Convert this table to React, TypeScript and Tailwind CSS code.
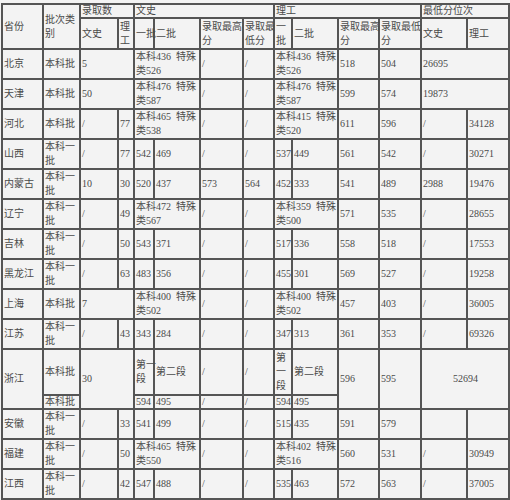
import type { ReactNode } from 'react'

type CellProps = {
  children?: ReactNode
  cs?: number
  rs?: number
  center?: boolean
}

/** One table cell; lines are broken by hand with <br/> so wrapping never shifts the grid. */
function C({ children, cs, rs, center }: CellProps) {
  return (
    <td
      colSpan={cs}
      rowSpan={rs}
      className={`overflow-visible whitespace-nowrap border-2 border-[#555] py-0 pl-px pr-0 align-middle ${center ? 'text-center' : 'text-left'}`}
    >
      {children}
    </td>
  )
}

function Two({ a, b }: { a: string; b: string }) {
  return (
    <>
      {a}
      <br />
      {b}
    </>
  )
}

const widths = [41, 37, 38, 16, 20, 46, 43, 31, 18, 46, 41, 42, 46, 42]

// SimSun's space is half an em wide, wider than the Liberation one
const sp = '\u2002'

type Simple = [string, string, string, string, string, string, string, string, string, string, string, string, string, string]

// rows where every column has its own cell (一批 / 二批 as plain numbers)
function Plain({ r }: { r: Simple }) {
  return (
    <tr className="h-[30px]">
      <C>{r[0]}</C>
      <C>{r[1] === '本科一批' ? <Two a="本科一" b="批" /> : r[1]}</C>
      {r.slice(2).map((v, i) => (
        <C key={i}>{v}</C>
      ))}
    </tr>
  )
}

type Special = {
  name: string
  batch: string
  wenNum: string
  liNum: string
  wen: [string, string]
  li: [string, string]
  hi: string
  lo: string
  rankWen: string
  rankLi: string
}

// rows where 一批 and 二批 are joined for "本科xxx 特殊类yyy"
function Joined({ r }: { r: Special }) {
  return (
    <tr className="h-[30px]">
      <C>{r.name}</C>
      <C>{r.batch === '本科一批' ? <Two a="本科一" b="批" /> : r.batch}</C>
      <C>{r.wenNum}</C>
      <C>{r.liNum}</C>
      <C cs={2}>
        <Two a={r.wen[0]} b={r.wen[1]} />
      </C>
      <C>/</C>
      <C>/</C>
      <C cs={2}>
        <Two a={r.li[0]} b={r.li[1]} />
      </C>
      <C>{r.hi}</C>
      <C>{r.lo}</C>
      <C>{r.rankWen}</C>
      <C>{r.rankLi}</C>
    </tr>
  )
}

function Wide({ name, num, wen, li, hi, lo, rank }: { name: string; num: string; wen: [string, string]; li: [string, string]; hi: string; lo: string; rank: string }) {
  return (
    <tr className="h-[30px]">
      <C>{name}</C>
      <C>本科批</C>
      <C cs={2}>{num}</C>
      <C cs={2}>
        <Two a={wen[0]} b={wen[1]} />
      </C>
      <C>/</C>
      <C>/</C>
      <C cs={2}>
        <Two a={li[0]} b={li[1]} />
      </C>
      <C>{hi}</C>
      <C>{lo}</C>
      <C cs={2}>{rank}</C>
    </tr>
  )
}

export default function App() {
  return (
    <div className="h-[500px] w-[510px] overflow-hidden bg-[#f3f3f3] pl-px pt-[3px] font-['Liberation_Serif','Noto_Sans_CJK_SC',serif] text-[10px] leading-[14px] text-[#4a4a4a]">
      <table className="w-[509px] table-fixed border-collapse">
        <colgroup>
          {widths.map((w, i) => (
            <col key={i} style={{ width: w }} />
          ))}
        </colgroup>
        <tbody>
          <tr className="h-[14px] leading-[12px]">
            <C rs={2}>
              <span className="leading-[14px]">省份</span>
            </C>
            <C rs={2}>
              <div className="leading-[14px]">
                <Two a="批次类" b="别" />
              </div>
            </C>
            <C cs={2}>录取数</C>
            <C cs={4}>文史</C>
            <C cs={4}>理工</C>
            <C cs={2}>最低分位次</C>
          </tr>
          <tr className="h-[31px]">
            <C>文史</C>
            <C>
              <Two a="理" b="工" />
            </C>
            <C>一批</C>
            <C>二批</C>
            <C>
              <Two a="录取最高" b="分" />
            </C>
            <C>
              <Two a="录取最" b="低分" />
            </C>
            <C>
              <Two a="一" b="批" />
            </C>
            <C>二批</C>
            <C>
              <Two a="录取最高" b="分" />
            </C>
            <C>
              <Two a="录取最低" b="分" />
            </C>
            <C>文史</C>
            <C>理工</C>
          </tr>

          <Wide name="北京" num="5" wen={[`本科436${sp}特殊`, '类526']} li={[`本科436${sp}特殊`, '类526']} hi="518" lo="504" rank="26695" />
          <Wide name="天津" num="50" wen={[`本科476${sp}特殊`, '类587']} li={[`本科476${sp}特殊`, '类587']} hi="599" lo="574" rank="19873" />
          <Joined
            r={{ name: '河北', batch: '本科批', wenNum: '/', liNum: '77', wen: [`本科465${sp}特殊`, '类538'], li: [`本科415${sp}特殊`, '类520'], hi: '611', lo: '596', rankWen: '/', rankLi: '34128' }}
          />
          <Plain r={['山西', '本科一批', '/', '77', '542', '469', '/', '/', '537', '449', '561', '542', '/', '30271']} />
          <Plain r={['内蒙古', '本科一批', '10', '30', '520', '437', '573', '564', '452', '333', '541', '489', '2988', '19476']} />
          <Joined
            r={{ name: '辽宁', batch: '本科一批', wenNum: '/', liNum: '49', wen: [`本科472${sp}特殊`, '类567'], li: [`本科359${sp}特殊`, '类500'], hi: '571', lo: '535', rankWen: '/', rankLi: '28655' }}
          />
          <Plain r={['吉林', '本科一批', '/', '50', '543', '371', '/', '/', '517', '336', '558', '518', '/', '17553']} />
          <Plain r={['黑龙江', '本科一批', '/', '63', '483', '356', '/', '/', '455', '301', '569', '527', '/', '19258']} />
          <tr className="h-[30px]">
            <C>上海</C>
            <C>本科批</C>
            <C cs={2}>7</C>
            <C cs={2}>
              <Two a={`本科400${sp}特殊`} b="类502" />
            </C>
            <C>/</C>
            <C>/</C>
            <C cs={2}>
              <Two a={`本科400${sp}特殊`} b="类502" />
            </C>
            <C>457</C>
            <C>403</C>
            <C>/</C>
            <C>36005</C>
          </tr>
          <Plain r={['江苏', '本科一批', '/', '43', '343', '284', '/', '/', '347', '313', '361', '353', '/', '69326']} />

          <tr className="h-[46px]">
            <C rs={2}>浙江</C>
            <C>本科批</C>
            <C cs={2} rs={2}>
              30
            </C>
            <C>
              <Two a="第一" b="段" />
            </C>
            <C>第二段</C>
            <C>/</C>
            <C>/</C>
            <C>
              第<br />一<br />段
            </C>
            <C>第二段</C>
            <C rs={2}>596</C>
            <C rs={2}>595</C>
            <C cs={2} rs={2} center>
              52694
            </C>
          </tr>
          <tr className="h-[14px] leading-[12px]">
            <C>本科批</C>
            <C>594</C>
            <C>495</C>
            <C>/</C>
            <C>/</C>
            <C>594</C>
            <C>495</C>
          </tr>

          <Plain r={['安徽', '本科一批', '/', '33', '541', '499', '/', '/', '515', '435', '591', '579', '', '']} />
          <Joined
            r={{ name: '福建', batch: '本科一批', wenNum: '/', liNum: '50', wen: [`本科465${sp}特殊`, '类550'], li: [`本科402${sp}特殊`, '类516'], hi: '560', lo: '531', rankWen: '/', rankLi: '30949' }}
          />
          <Plain r={['江西', '本科一批', '/', '42', '547', '488', '/', '/', '535', '463', '572', '563', '/', '37005']} />
          <Plain r={['', '', '', '', '', '', '', '', '', '', '', '', '', '']} />
        </tbody>
      </table>
    </div>
  )
}
